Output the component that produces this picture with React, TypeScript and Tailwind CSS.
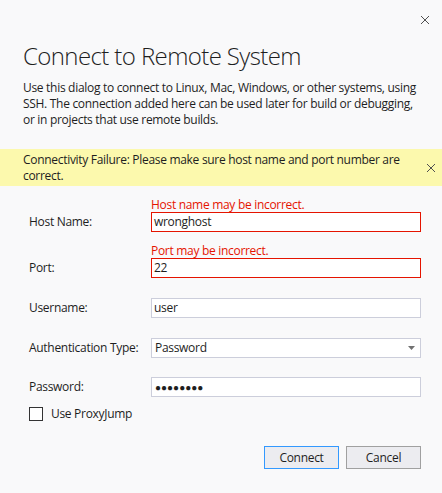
import React from "react";

const font = { fontFamily: '"Segoe UI", "Open Sans", "Noto Sans", sans-serif' };

function XIcon() {
  return (
    <svg width="10" height="10" viewBox="0 0 10 10" fill="none">
      <path d="M1 1 L9 9 M9 1 L1 9" stroke="#505050" strokeWidth="1" />
    </svg>
  );
}

export default function App() {
  return (
    <div
      className="w-[442px] h-[493px] bg-[#f9f9fa] text-[#1e1e1e] flex flex-col text-[12px] tracking-[-0.3px] overflow-hidden"
      style={font}
    >
      <div className="flex justify-end pt-[15px] pr-[12px] h-[40px]">
        <XIcon />
      </div>
      <div className="px-[23px] text-[24px] leading-[32px] font-light tracking-[-0.6px] text-[#1e1e1e] whitespace-nowrap">
        Connect to Remote System
      </div>
      <div className="px-[23px] mt-[8px] leading-[16px] text-[12px] whitespace-nowrap flex flex-col">
        <div>Use this dialog to connect to Linux, Mac, Windows, or other systems, using</div>
        <div>SSH. The connection added here can be used later for build or debugging,</div>
        <div>or in projects that use remote builds.</div>
      </div>
      <div className="mt-[21px] h-[37px] bg-[#fcf9ad] flex items-center pl-[23px] pr-[6px]">
        <div className="flex-1 leading-[16px] whitespace-nowrap flex flex-col">
          <div>Connectivity Failure: Please make sure host name and port number are</div>
          <div>correct.</div>
        </div>
        <XIcon />
      </div>
      <div className="pl-[29px] pt-[12px] grid grid-cols-[122px_270px]">
        <div />
        <div className="text-[#e51400] leading-[14px]">Host name may be incorrect.</div>
        <div className="flex items-center h-[20px]">Host Name:</div>
        <div className="h-[20px] border border-[#e51400] bg-white flex items-center px-[2px]">wronghost</div>

        <div />
        <div className="mt-[12px] text-[#e51400] leading-[14px]">Port may be incorrect.</div>
        <div className="flex items-center h-[20px]">Port:</div>
        <div className="h-[20px] border border-[#e51400] bg-white flex items-center px-[2px]">22</div>

        <div className="mt-[20px] flex items-center h-[20px]">Username:</div>
        <div className="mt-[20px] h-[20px] border border-[#cccedb] bg-white flex items-center px-[2px]">user</div>

        <div className="mt-[20px] flex items-center h-[20px]">Authentication Type:</div>
        <div className="mt-[20px] h-[20px] border border-[#cccedb] bg-white flex items-center pl-[3px] pr-[5px]">
          <span className="flex-1">Password</span>
          <svg width="7" height="4" viewBox="0 0 7 4">
            <path d="M0 0 H7 L3.5 4 Z" fill="#717171" />
          </svg>
        </div>

        <div className="mt-[19px] flex items-center h-[20px]">Password:</div>
        <div className="mt-[19px] h-[20px] border border-[#cccedb] bg-white flex items-center px-[3px] text-[10px] tracking-[0px]">
          ●●●●●●●●
        </div>
      </div>
      <div className="pl-[29px] mt-[8px] flex items-center gap-[8px]">
        <div className="w-[14px] h-[14px] border border-[#333] bg-white" />
        <span>Use ProxyJump</span>
      </div>
      <div className="mt-[23px] flex justify-end gap-[7px] pr-[21px]">
        <button className="w-[75px] h-[23px] border border-[#3399ff] bg-[#ececf0] text-[12px]">Connect</button>
        <button className="w-[75px] h-[23px] border border-[#a0a0a0] bg-[#ececf0] text-[12px]">Cancel</button>
      </div>
    </div>
  );
}
